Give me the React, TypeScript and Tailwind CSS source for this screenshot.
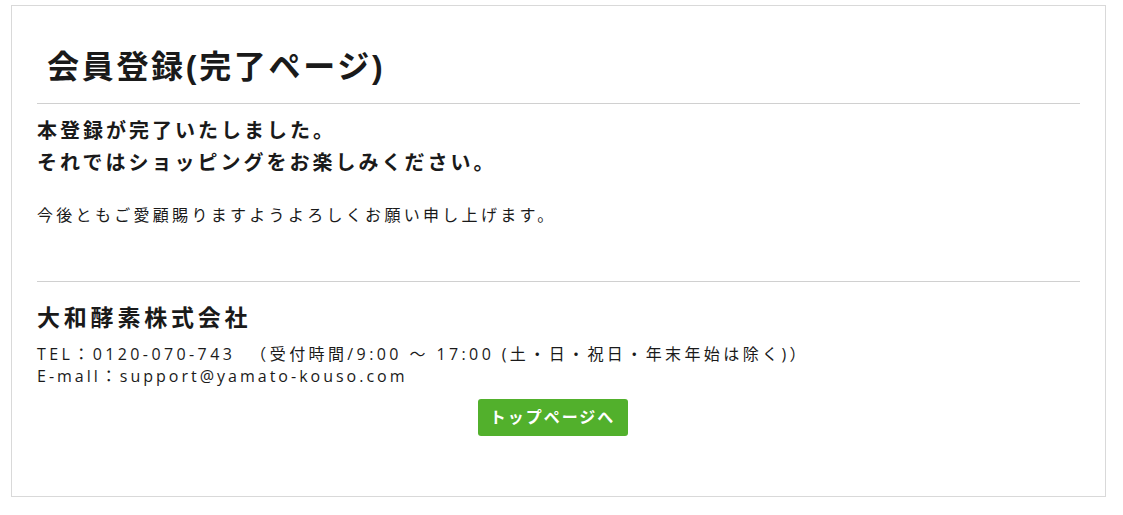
const JP = "font-['Liberation_Sans','Noto_Sans_CJK_JP',sans-serif]"

export default function App() {
  return (
    <div className={`h-[515px] w-[1123px] bg-white pl-[11px] pt-[5px] text-[#1a1a1a] ${JP}`}>
      <div className="h-[492px] w-[1095px] border border-[#d9d9d9] px-[25px]">
        <h1 className="mb-[15px] mt-[40px] pl-[10px] text-[32px] font-bold leading-[42px] tracking-[2.7px]">
          会員登録(完了ページ)
        </h1>
        <div className="border-t border-[#d0d0d0]" />

        <p className="mt-[11px] text-[20px] font-bold leading-[32px] tracking-[3px]">
          本登録が完了いたしました。
          <br />
          それではショッピングをお楽しみください。
        </p>
        <p className="mt-[25px] text-[16px] leading-[24px] tracking-[3.3px]">
          今後ともご愛顧賜りますようよろしくお願い申し上げます。
        </p>

        <div className="mt-[53px] border-t border-[#d0d0d0]" />

        <h2 className="mt-[21px] text-[23px] font-bold leading-[30px] tracking-[3.8px]">
          大和酵素株式会社
        </h2>
        <div className="mt-[10px] font-['Open_Sans','Noto_Sans_CJK_JP',sans-serif] text-[16px] leading-[22px]">
          <p className="tracking-[3.4px]">TEL：0120-070-743&nbsp; （受付時間/9:00 〜 17:00 (土・日・祝日・年末年始は除く)）</p>
          <p className="tracking-[3px]">E-mall：support@yamato-kouso.com</p>
        </div>

        <div className="mt-[12px] flex justify-center pr-[12px]">
          <button className="flex h-[37px] w-[150px] items-center justify-center rounded-[3px] bg-[#52b02c] text-[16px] font-bold tracking-[2px] text-white">
            トップページへ
          </button>
        </div>
      </div>
    </div>
  )
}
